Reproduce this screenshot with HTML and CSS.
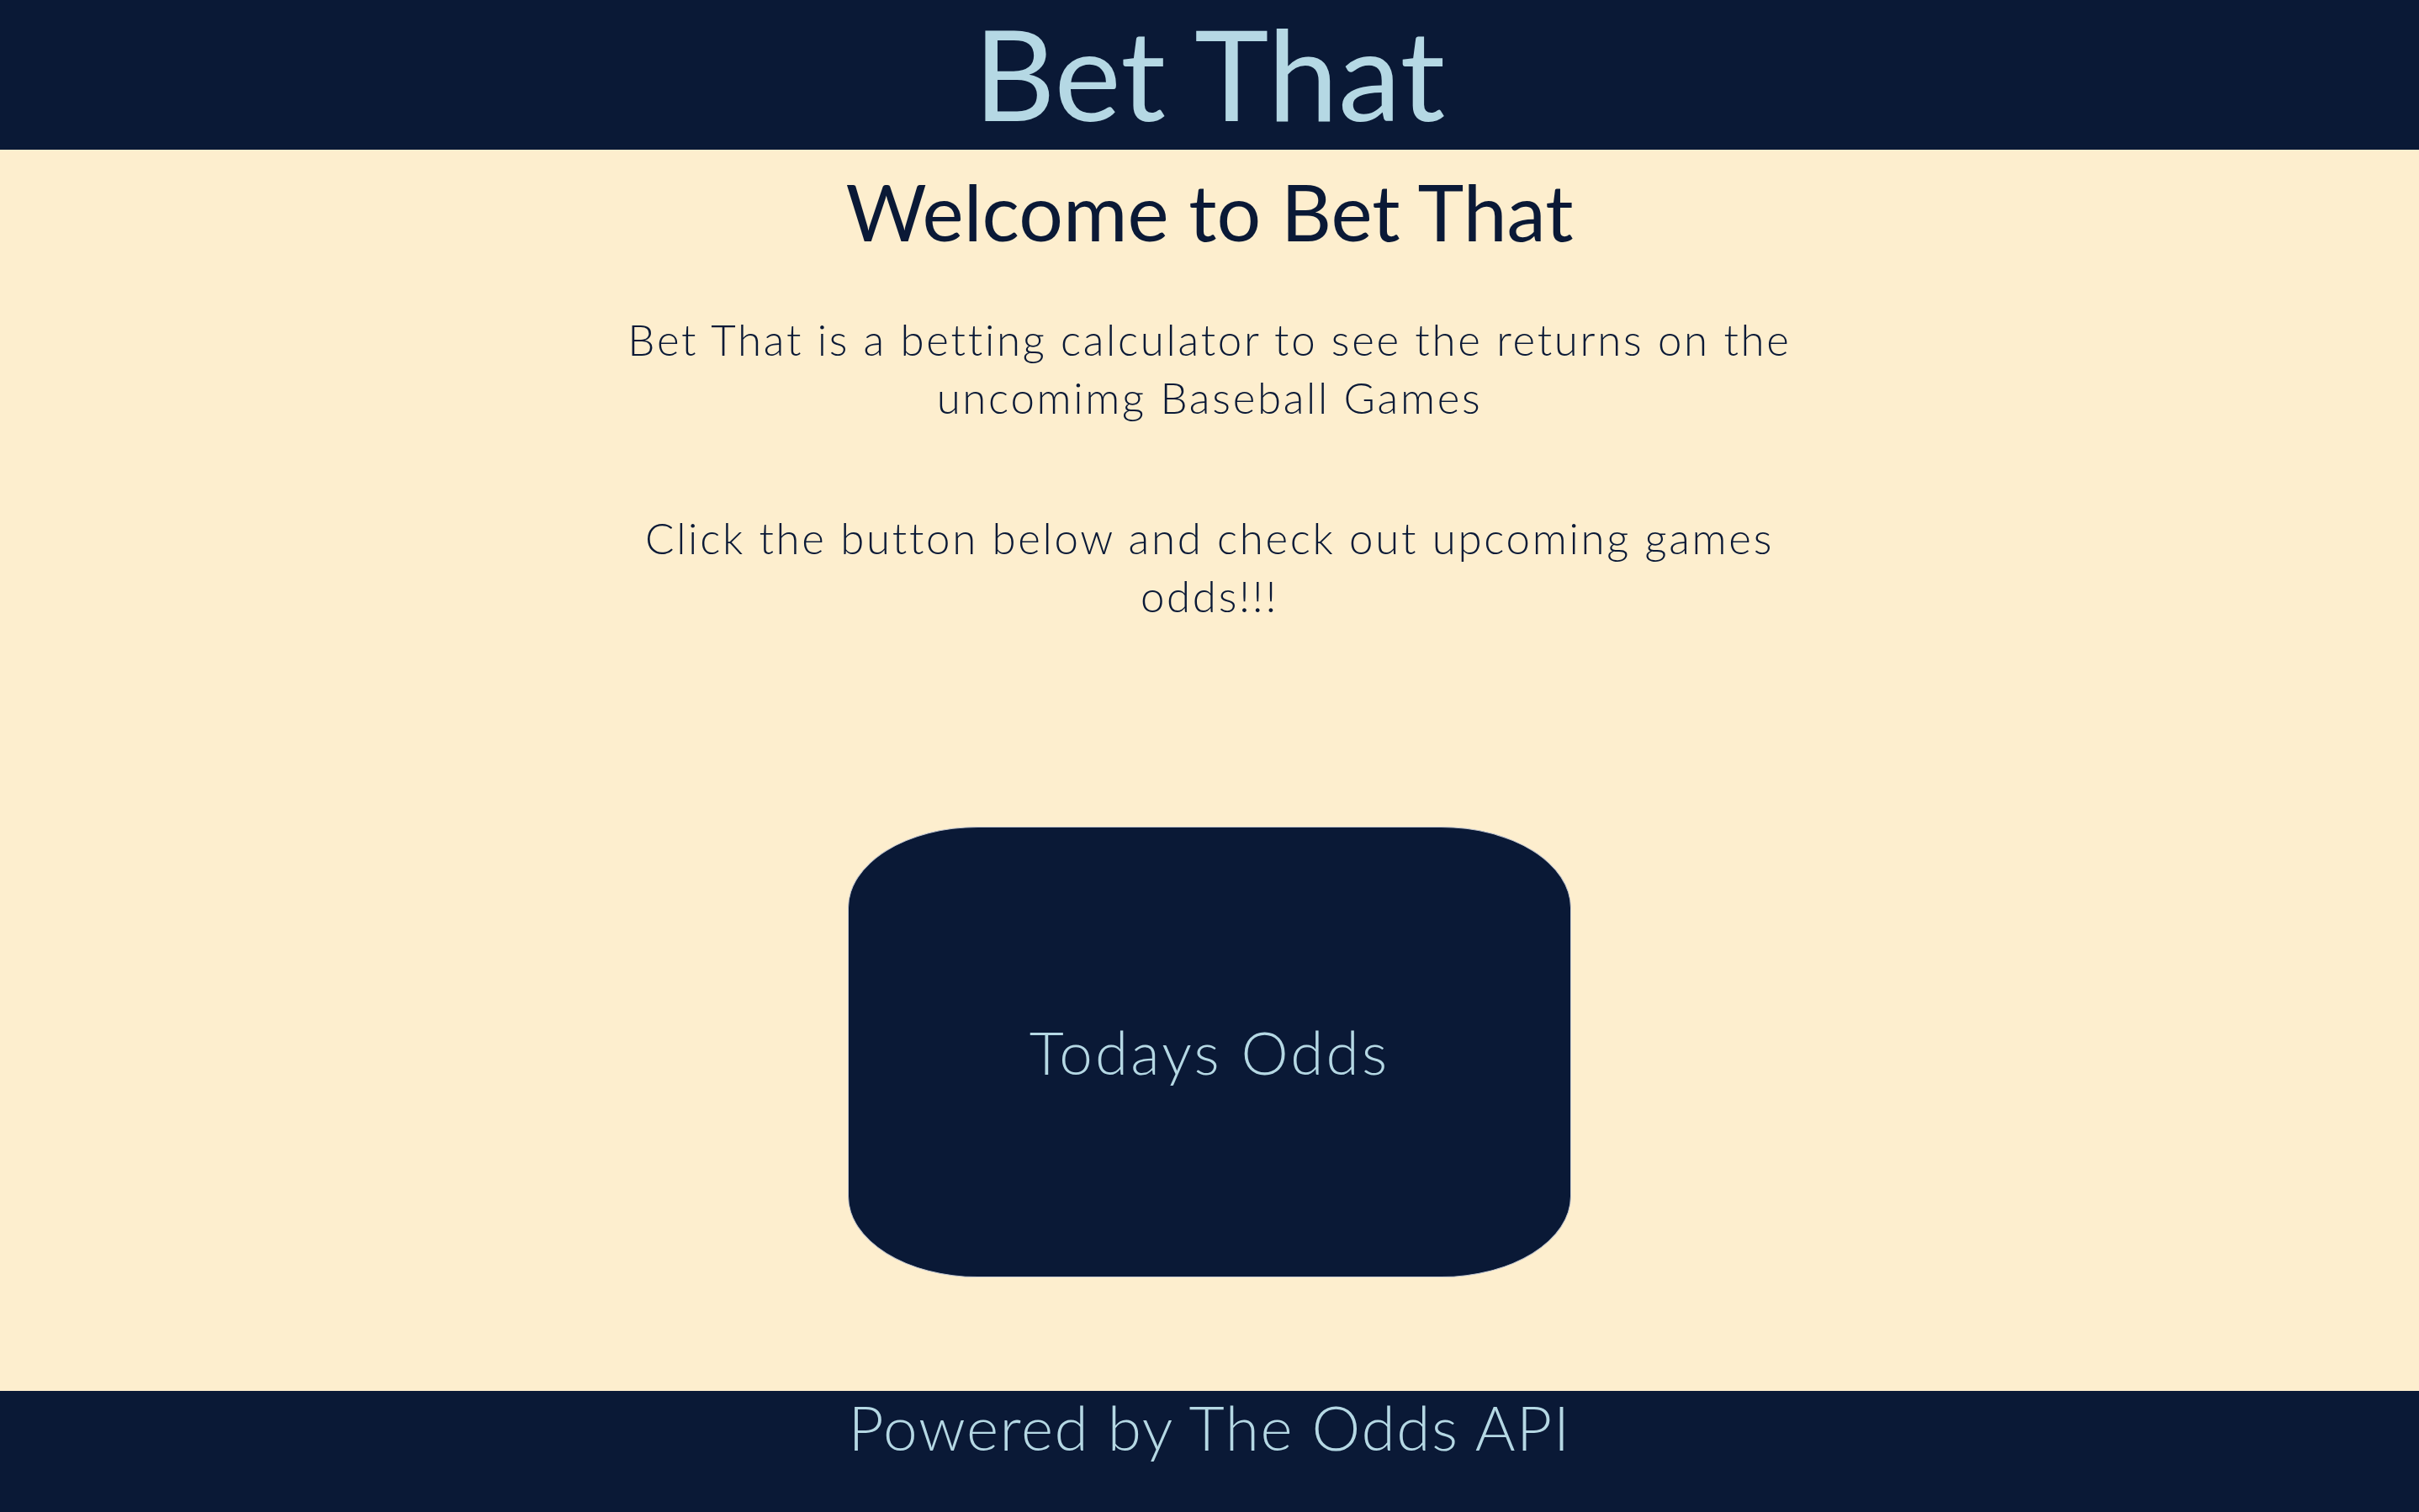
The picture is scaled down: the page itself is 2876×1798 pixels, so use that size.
FILE: index.html
```html
<!DOCTYPE html>
<html lang="en">
<head>
<meta charset="utf-8">
<title>Bet That</title>
<link rel="stylesheet" href="styles.css">
</head>
<body>
<div class="page">
  <header class="site-header">
    <h1 class="brand">Bet That</h1>
  </header>
  <main class="content">
    <h2 class="welcome">Welcome to Bet That</h2>
    <p class="intro">Bet That is a betting calculator to see the returns on the uncomimg Baseball Games</p>
    <p class="intro intro-cta">Click the button below and check out upcoming games odds!!!</p>
    <button class="odds-btn" type="button">Todays Odds</button>
  </main>
  <footer class="site-footer">
    <p class="powered">Powered by The Odds API</p>
  </footer>
</div>
</body>
</html>
```

FILE: styles.css
```css
html, body {
  margin: 0;
  padding: 0;
}

body {
  background: #fdeece;
  font-family: "Lato", "Noto Sans", sans-serif;
  color: #0a1936;
}

.page {
  min-height: 100vh;
  display: flex;
  flex-direction: column;
}

.site-header {
  background: #0a1936;
  height: 178px;
  display: flex;
  align-items: center;
  justify-content: center;
}

.brand {
  margin: 0;
  font-size: 150px;
  line-height: 1;
  font-weight: 400;
  color: #b5d8e4;
  padding-bottom: 6px;
}

.content {
  flex: 1;
  display: flex;
  flex-direction: column;
  align-items: center;
  padding-top: 18px;
  padding-bottom: 135px;
}

.welcome {
  margin: 0;
  font-size: 93px;
  line-height: 1.2;
  font-weight: 400;
}

.intro {
  margin: 61px 0 0;
  width: 1440px;
  text-align: center;
  font-size: 51px;
  line-height: 69px;
  font-weight: 300;
  letter-spacing: 2.7px;
}

.intro-cta {
  margin-top: 98px;
}

.odds-btn {
  margin-top: 240px;
  width: 860px;
  height: 536px;
  background: #0a1936;
  color: #b5d8e4;
  border: 1px solid #c3c8d2;
  border-radius: 18%;
  font-family: "Lato", "Noto Sans", sans-serif;
  font-size: 71px;
  font-weight: 300;
  letter-spacing: 3.2px;
  cursor: pointer;
}

.site-footer {
  background: #0a1936;
  height: 144px;
  text-align: center;
}

.powered {
  margin: 0;
  font-size: 73px;
  line-height: 1.2;
  font-weight: 300;
  letter-spacing: 1.6px;
  color: #b5d8e4;
}
```
